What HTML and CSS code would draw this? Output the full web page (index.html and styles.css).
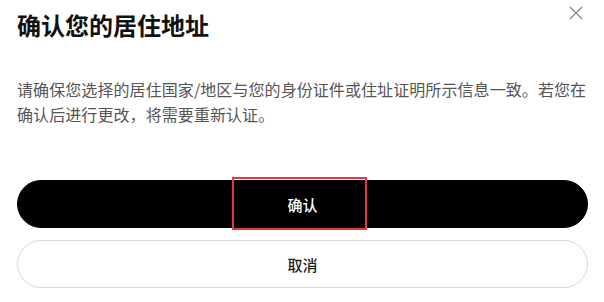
FILE: index.html
```html
<!DOCTYPE html>
<html lang="zh-CN">
<head>
<meta charset="utf-8">
<link rel="stylesheet" href="styles.css">
</head>
<body>
<div class="dialog">
  <button class="close" aria-label="关闭">
    <svg width="14" height="14" viewBox="0 0 14 14"><path d="M1 1L13 13M13 1L1 13" stroke="#8a8a8a" stroke-width="1.3" fill="none"/></svg>
  </button>
  <h1 class="title">确认您的居住地址</h1>
  <p class="desc">请确保您选择的居住国家/地区与您的身份证件或住址证明所示信息一致。若您在确认后进行更改，将需要重新认证。</p>
  <div class="actions">
    <button class="btn btn-primary">确认</button>
    <button class="btn btn-secondary">取消</button>
  </div>
  <div class="highlight"></div>
</div>
</body>
</html>
```
FILE: styles.css
```css
html, body {
  margin: 0;
  padding: 0;
  background: #fff;
}
body {
  font-family: "Noto Sans CJK SC", "Noto Sans", sans-serif;
  width: 604px;
  height: 302px;
  overflow: hidden;
}
.dialog {
  position: relative;
  padding: 9px 17px 0 17px;
  box-sizing: border-box;
  height: 302px;
}
.close {
  position: absolute;
  top: 6px;
  left: 569px;
  width: 14px;
  height: 14px;
  padding: 0;
  border: 0;
  background: none;
  display: flex;
}
.title {
  margin: 0;
  font-size: 24px;
  line-height: 32px;
  font-weight: 700;
  color: #111;
}
.desc {
  margin: 36px 0 0 0;
  font-size: 16px;
  line-height: 25px;
  letter-spacing: 0.08px;
  color: #555;
  width: 572px;
}
.actions {
  margin-top: 53px;
  display: flex;
  flex-direction: column;
  gap: 12px;
  width: 571px;
}
.btn {
  height: 48px;
  border-radius: 24px;
  font-family: inherit;
  font-size: 15px;
  font-weight: 500;
  padding: 0;
  box-sizing: border-box;
}
.btn-primary {
  background: #000;
  color: #fff;
  border: 1px solid #000;
}
.btn-secondary {
  background: #fff;
  color: #222;
  border: 1px solid #d8d8d8;
}
.highlight {
  position: absolute;
  left: 232px;
  top: 177px;
  width: 135px;
  height: 53px;
  box-sizing: border-box;
  border: 2px solid #e8383d;
  pointer-events: none;
}
```
